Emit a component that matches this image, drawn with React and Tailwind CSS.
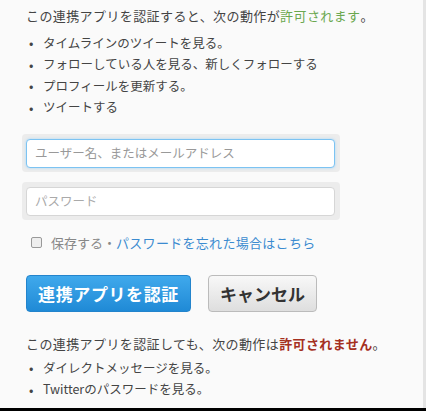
import React from "react";

const font = { fontFamily: '"Noto Sans CJK JP", "Noto Sans", sans-serif' };

function Bullet({ children }) {
  return (
    <li className="flex items-center h-[21.5px]">
      <span className="w-[17px] pl-[3px] text-[#444] text-[13px]">•</span>
      <span className="text-[12.5px]">{children}</span>
    </li>
  );
}

export default function App() {
  return (
    <div className="w-[426px] h-[411px] bg-black" style={font}>
      <div className="flex h-[408px]">
        <div className="w-[423px] h-full bg-[#fafafa] text-[#444] text-[13px] leading-none pl-[26px] pt-[8px] flex flex-col">
          <p className="h-[15px] flex items-center tracking-[0.4px]">
            この連携アプリを認証すると、次の動作が
            <span className="text-[#6aa84f]">許可されます</span>。
          </p>
          <ul className="mt-[9px] flex flex-col">
            <Bullet>タイムラインのツイートを見る。</Bullet>
            <Bullet>フォローしている人を見る、新しくフォローする</Bullet>
            <Bullet>プロフィールを更新する。</Bullet>
            <Bullet>ツイートする</Bullet>
          </ul>

          <div className="mt-[16px] ml-[-4px] w-[318px] h-[38px] bg-[#ececec] rounded-[4px] flex items-center pl-[4px]">
            <div className="w-[309px] h-[29px] bg-white border border-[#7cc3f2] rounded-[4px] shadow-[0_0_3px_#a8d6f7] flex items-center pl-[8px] text-[#999] text-[12.5px]">
              ユーザー名、またはメールアドレス
            </div>
          </div>
          <div className="mt-[10px] ml-[-4px] w-[318px] h-[38px] bg-[#ececec] rounded-[4px] flex items-center pl-[4px]">
            <div className="w-[309px] h-[29px] bg-white border border-[#d6d6d6] rounded-[4px] flex items-center pl-[8px] text-[#aaa] text-[12.5px]">
              パスワード
            </div>
          </div>

          <div className="mt-[15px] flex items-center h-[14px] pl-[5px]">
            <span className="w-[11px] h-[11px] border border-[#999] rounded-[2px] bg-[#eee]"></span>
            <span className="ml-[9px] text-[#888]">保存する・</span>
            <span className="text-[#3b8bd0] tracking-[0.3px]">パスワードを忘れた場合はこちら</span>
          </div>

          <div className="mt-[26px] flex items-center gap-[17px]">
            <div className="w-[165px] h-[37px] rounded-[4px] bg-gradient-to-b from-[#3fa9ec] to-[#1f8ad6] border border-[#2384cc] text-white text-[17px] font-bold flex items-center justify-center tracking-[0.6px]">
              連携アプリを認証
            </div>
            <div className="w-[109px] h-[37px] rounded-[4px] bg-gradient-to-b from-[#f8f8f8] to-[#dedede] border border-[#bbb] text-[#333] text-[17px] font-bold flex items-center justify-center">
              キャンセル
            </div>
          </div>

          <p className="mt-[24px] h-[15px] flex items-center tracking-[0.4px]">
            この連携アプリを認証しても、次の動作は
            <span className="text-[#a5301f] font-bold">許可されません</span>。
          </p>
          <ul className="mt-[6px] flex flex-col">
            <Bullet>ダイレクトメッセージを見る。</Bullet>
            <Bullet>Twitterのパスワードを見る。</Bullet>
          </ul>
        </div>
        <div className="w-[3px] h-full bg-[#e4e4e4]"></div>
      </div>
    </div>
  );
}
